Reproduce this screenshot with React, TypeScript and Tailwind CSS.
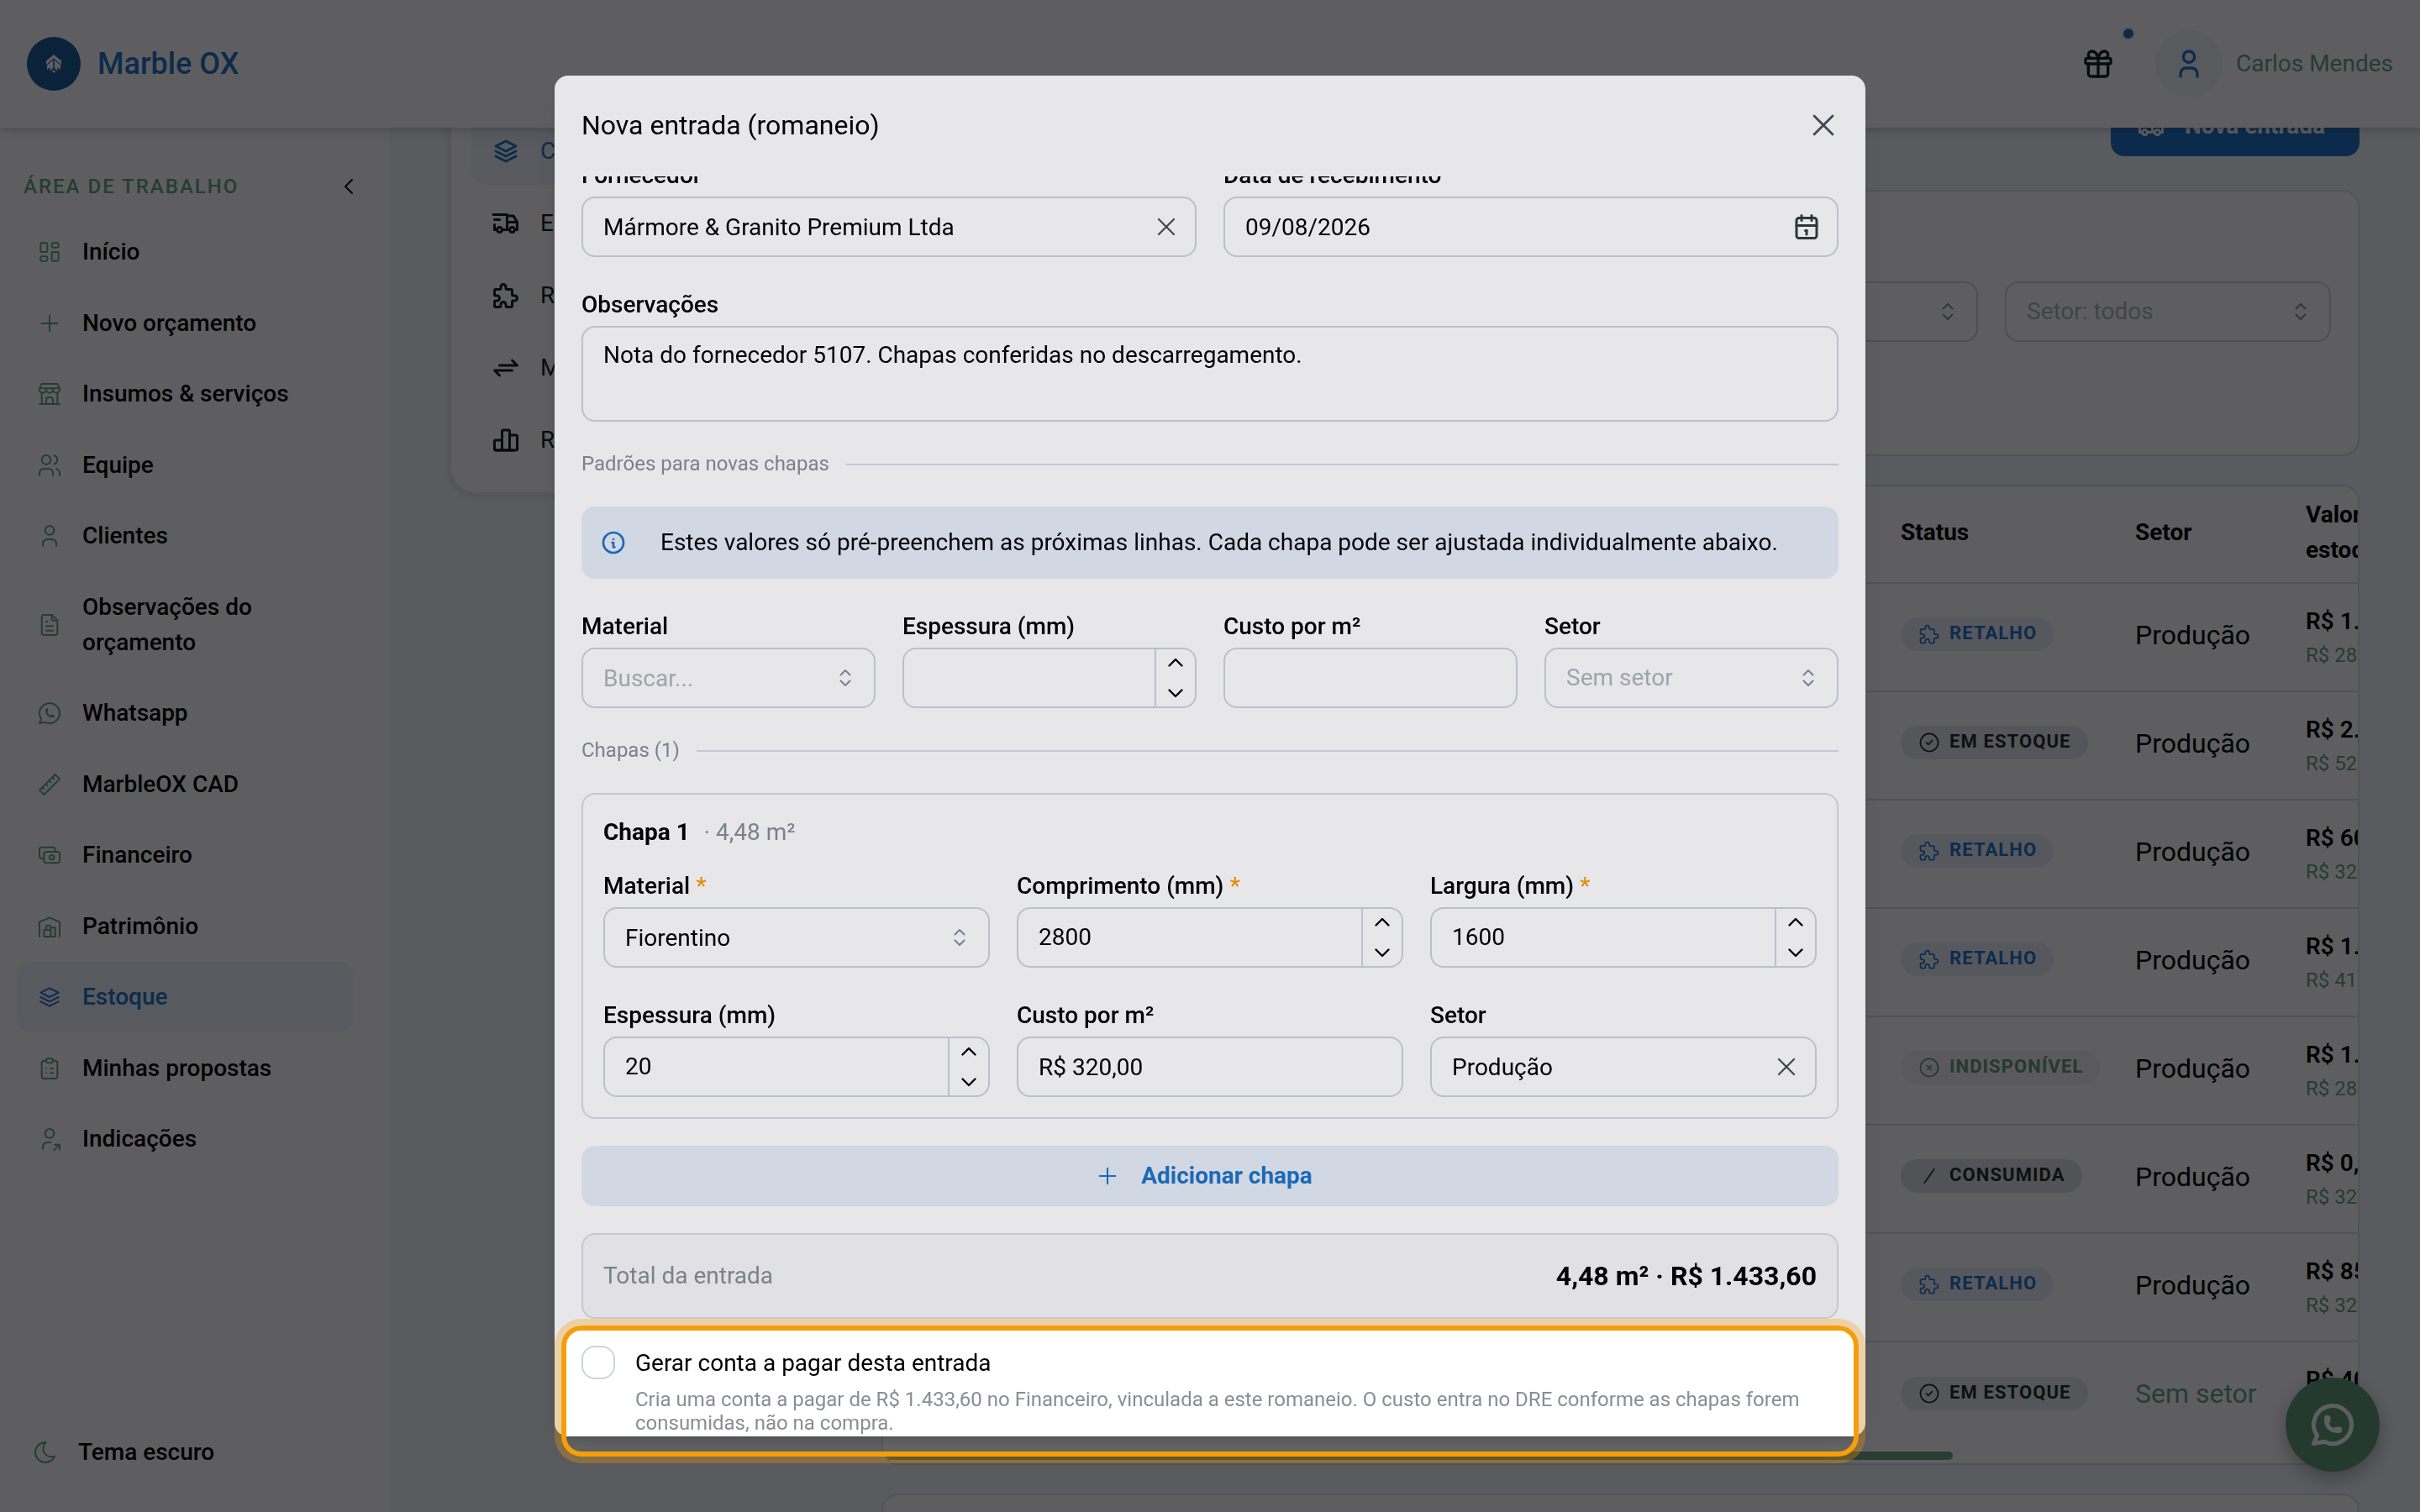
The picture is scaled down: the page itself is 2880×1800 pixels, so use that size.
import React from 'react';
import {
  TbArrowsExchange,
  TbBrandWhatsapp,
  TbBuildingStore,
  TbBuildingWarehouse,
  TbCalendar,
  TbCash,
  TbChartBar,
  TbChevronLeft,
  TbCircleCheck,
  TbCircleX,
  TbClipboardList,
  TbFileText,
  TbGift,
  TbInfoCircle,
  TbLayoutDashboard,
  TbMoon,
  TbPlus,
  TbPuzzle,
  TbRuler2,
  TbSlash,
  TbStack2,
  TbTruckDelivery,
  TbUser,
  TbUserShare,
  TbUsers,
  TbX,
} from 'react-icons/tb';
import type { IconType } from 'react-icons';

const NAV_ITEMS: { label: string; icon: IconType; active?: boolean }[] = [
  { label: 'Início', icon: TbLayoutDashboard },
  { label: 'Novo orçamento', icon: TbPlus },
  { label: 'Insumos & serviços', icon: TbBuildingStore },
  { label: 'Equipe', icon: TbUsers },
  { label: 'Clientes', icon: TbUser },
  { label: 'Observações do orçamento', icon: TbFileText },
  { label: 'Whatsapp', icon: TbBrandWhatsapp },
  { label: 'MarbleOX CAD', icon: TbRuler2 },
  { label: 'Financeiro', icon: TbCash },
  { label: 'Patrimônio', icon: TbBuildingWarehouse },
  { label: 'Estoque', icon: TbStack2, active: true },
  { label: 'Minhas propostas', icon: TbClipboardList },
  { label: 'Indicações', icon: TbUserShare },
];

const STOCK_TABS: { label: string; icon: IconType; active?: boolean }[] = [
  { label: 'Chapas', icon: TbStack2, active: true },
  { label: 'Entradas', icon: TbTruckDelivery },
  { label: 'Retalhos', icon: TbPuzzle },
  { label: 'Movimentações', icon: TbArrowsExchange },
  { label: 'Relatórios', icon: TbChartBar },
];

type Status = 'RETALHO' | 'EM ESTOQUE' | 'INDISPONÍVEL' | 'CONSUMIDA';

const STATUS_STYLE: Record<Status, { icon: IconType; className: string }> = {
  RETALHO: { icon: TbPuzzle, className: 'bg-[#e8eff9] text-[#1d73c8]' },
  'EM ESTOQUE': { icon: TbCircleCheck, className: 'bg-[#e6e9ee] text-[#1c2b24]' },
  INDISPONÍVEL: { icon: TbCircleX, className: 'bg-[#f3f4f8] text-[#639a6c]' },
  CONSUMIDA: { icon: TbSlash, className: 'bg-[#dcdfe4] text-[#1c2b24]' },
};

const ROWS: { status: Status; sector?: string; value: string; perMeter: string }[] = [
  { status: 'RETALHO', sector: 'Produção', value: 'R$ 1.120,00', perMeter: 'R$ 280,00/m²' },
  { status: 'EM ESTOQUE', sector: 'Produção', value: 'R$ 2.340,00', perMeter: 'R$ 520,00/m²' },
  { status: 'RETALHO', sector: 'Produção', value: 'R$ 608,00', perMeter: 'R$ 320,00/m²' },
  { status: 'RETALHO', sector: 'Produção', value: 'R$ 1.230,00', perMeter: 'R$ 410,00/m²' },
  { status: 'INDISPONÍVEL', sector: 'Produção', value: 'R$ 1.254,00', perMeter: 'R$ 280,00/m²' },
  { status: 'CONSUMIDA', sector: 'Produção', value: 'R$ 0,00', perMeter: 'R$ 320,00/m²' },
  { status: 'RETALHO', sector: 'Produção', value: 'R$ 854,00', perMeter: 'R$ 320,00/m²' },
  { status: 'EM ESTOQUE', value: 'R$ 409,00', perMeter: 'R$ 320,00/m²' },
];

const BOX = 'h-[72px] w-full rounded-2xl border-2 border-[#ced4da] bg-transparent px-6 text-[28px] outline-none';

const Selector: React.FC = () => (
  <svg
    viewBox="0 0 16 24"
    className="pointer-events-none absolute right-7 top-1/2 h-6 w-4 -translate-y-1/2"
    fill="none"
    stroke="currentColor"
    strokeWidth="2"
    strokeLinecap="round"
    strokeLinejoin="round"
  >
    <path d="M2.5 8.5L8 3l5.5 5.5M2.5 15.5L8 21l5.5-5.5" />
  </svg>
);

const Chevron: React.FC<{ up?: boolean }> = ({ up }) => (
  <svg viewBox="0 0 20 12" className="h-3 w-5" fill="none" stroke="currentColor" strokeWidth="2.4" strokeLinecap="round" strokeLinejoin="round">
    <path d={up ? 'M2.5 9.5L10 2l7.5 7.5' : 'M2.5 2.5L10 10l7.5-7.5'} />
  </svg>
);

interface FieldProps {
  id: string;
  label: string;
  required?: boolean;
  children: React.ReactNode;
}

const Field: React.FC<FieldProps> = ({ id, label, required, children }) => (
  <div className="flex flex-col gap-1 pt-1">
    <label htmlFor={id} className="text-[28px] font-medium leading-[42px]">
      {label}
      {required && <span className="text-[#f59e0b]"> *</span>}
    </label>
    {children}
  </div>
);

const NumberBox: React.FC<{ id: string; value?: string }> = ({ id, value }) => (
  <div className="flex h-[72px] overflow-hidden rounded-2xl border-2 border-[#ced4da]">
    <input id={id} inputMode="numeric" defaultValue={value} className="min-w-0 flex-1 bg-transparent px-6 text-[28px] outline-none" />
    <div className="flex w-12 shrink-0 flex-col border-l-2 border-[#ced4da]">
      <button type="button" aria-label="Aumentar" className="flex flex-1 items-center justify-center pb-[2px]">
        <Chevron up />
      </button>
      <button type="button" aria-label="Diminuir" className="flex flex-1 items-center justify-center pt-[2px]">
        <Chevron />
      </button>
    </div>
  </div>
);

const ClearableBox: React.FC<{ id: string; value: string }> = ({ id, value }) => (
  <div className="relative">
    <input id={id} defaultValue={value} className={BOX} />
    <button type="button" aria-label="Limpar" className="absolute right-[18px] top-[18px] text-[#495057]">
      <TbX size={36} strokeWidth={1.5} />
    </button>
  </div>
);

const SearchBox: React.FC<{ id: string; placeholder?: string; value?: string }> = ({ id, placeholder, value }) => (
  <div className="relative">
    <input id={id} placeholder={placeholder} defaultValue={value} className={`${BOX} placeholder:text-[#adb5bd]`} />
    <span className="text-[#868e96]">
      <Selector />
    </span>
  </div>
);

const SelectBox: React.FC<{ id: string; text: string; label?: string }> = ({ id, text, label }) => (
  <div className="relative">
    <select id={id} aria-label={label} className={`${BOX} appearance-none text-[#adb5bd]`}>
      <option>{text}</option>
    </select>
    <span className="text-[#868e96]">
      <Selector />
    </span>
  </div>
);

const Divider: React.FC<{ label: string }> = ({ label }) => (
  <div className="flex items-center gap-5">
    <span className="text-2xl leading-[37px] text-[#868e96]">{label}</span>
    <span className="h-[2px] flex-1 bg-[#dbdde4]" />
  </div>
);

const Header: React.FC = () => (
  <header className="z-10 flex h-[152px] shrink-0 items-center justify-between bg-white px-8 shadow-[0_2px_6px_rgba(0,0,0,0.15),0_8px_16px_rgba(0,0,0,0.08)]">
    <a href="#" className="flex items-center gap-5">
      <span className="flex size-16 items-center justify-center rounded-full bg-[#19599a]">
        <svg viewBox="0 0 18 22" className="h-[22px] w-[18px]">
          <path d="M9 0L18 7.5V12L9 4.5 0 12V7.5z" fill="#fff" />
          <path d="M8.3 6.5V16l-3.8 3.500V15L1 18v-5.500zM9.700 6.500V16l3.800 3.500V15l3.500 3v-5.500z" fill="#fff" />
          <circle cx="9" cy="20" r="1.6" fill="#fff" />
        </svg>
      </span>
      <span className="text-4xl font-medium text-[#1d73c8]">Marble OX</span>
    </a>
    <div className="flex items-center">
      <button type="button" aria-label="Novidades" className="relative mr-12 flex size-10 items-center justify-center text-[#0f1a15]">
        <TbGift size={40} />
        <span className="absolute -right-6 -top-6 size-4 rounded-full border-2 border-[#e8eff9] bg-[#1d73c8]" />
      </button>
      <button type="button" className="flex items-center gap-4">
        <span className="flex size-20 items-center justify-center rounded-full bg-[#eff3fa] text-[#1d73c8]">
          <TbUser size={40} />
        </span>
        <span className="text-[28px] text-[#63a37a]">Carlos Mendes</span>
      </button>
    </div>
  </header>
);

const Sidebar: React.FC = () => (
  <aside className="flex w-[463px] shrink-0 flex-col bg-white">
    <div className="flex items-center justify-between pb-4 pl-7 pr-8 pt-[50px]">
      <span className="text-2xl font-medium leading-10 tracking-[2px] text-[#63a37a]">ÁREA DE TRABALHO</span>
      <button type="button" aria-label="Recolher menu">
        <TbChevronLeft size={32} strokeWidth={1.5} />
      </button>
    </div>
    <nav className="flex min-h-[1140px] flex-col justify-between pl-5 pr-[43px]">
      {NAV_ITEMS.map(({ label, icon: Icon, active }) => (
        <a
          key={label}
          href="#"
          className={`flex items-center gap-[23px] rounded-2xl px-[23px] py-[21px] text-[28px] font-medium leading-[42px] ${
            active ? 'bg-[#eef3fb] text-[#1d73c8]' : ''
          }`}
        >
          <Icon size={32} strokeWidth={1.5} className={active ? 'shrink-0' : 'shrink-0 text-[#63a37a]'} />
          <span>{label}</span>
        </a>
      ))}
    </nav>
    <button type="button" className="mb-[50px] mt-auto flex items-center gap-[23px] pl-[38px] text-[28px] font-medium leading-[42px]">
      <TbMoon size={32} strokeWidth={1.5} className="text-[#63a37a]" />
      Tema escuro
    </button>
  </aside>
);

const StatusBadge: React.FC<{ status: Status }> = ({ status }) => {
  const { icon: Icon, className } = STATUS_STYLE[status];
  return (
    <span className={`inline-flex h-10 items-center gap-[10px] rounded-full px-5 ${className}`}>
      <Icon size={28} strokeWidth={1.5} />
      <span className="pb-[2px] text-[22px] font-bold leading-8 tracking-wider">{status}</span>
    </span>
  );
};

const StockPage: React.FC = () => (
  <main className="flex min-w-0 flex-1 items-start gap-8 pl-[72px] pr-[72px]">
    {/* scrolled under the header */}
    <nav className="-mt-[38px] flex w-[482px] shrink-0 flex-col gap-[6px] rounded-[32px] border-2 border-[#e9ecf1] bg-white px-6 pb-[22px] pt-6 shadow-[0_4px_12px_rgba(0,0,0,0.1)]">
      {STOCK_TABS.map(({ label, icon: Icon, active }) => (
        <a
          key={label}
          href="#"
          className={`flex h-20 items-center gap-[23px] rounded-2xl px-[23px] text-[28px] ${
            active ? 'bg-[#eef3fb] text-[#1d73c8]' : 'text-[#0f1a15]'
          }`}
        >
          <Icon size={36} />
          {label}
        </a>
      ))}
    </nav>

    <div className="-mt-[38px] flex min-w-0 flex-1 flex-col gap-[34px]">
      <div className="mb-[6px] flex justify-end">
        <button type="button" className="flex h-[72px] items-center gap-[22px] rounded-2xl bg-[#1d73c8] pl-[30px] pr-[41px] text-[28px] font-bold text-white">
          <TbTruckDelivery size={36} />
          Nova entrada
        </button>
      </div>

      <section className="grid grid-cols-[1fr_388px_388px] gap-8 rounded-[20px] border-2 border-[#dbdde4] bg-white px-8 pb-[134px] pt-[107px]">
        <input aria-label="Pesquisar chapas" className={BOX} />
        <SelectBox id="filter-status" label="Status" text="" />
        <SelectBox id="filter-sector" label="Setor" text="Setor: todos" />
      </section>

      <section className="overflow-hidden rounded-[20px] border-2 border-[#dbdde4] bg-white">
        <table className="w-[1852px] table-fixed border-collapse text-left">
          <colgroup>
            <col className="w-[1191px]" />
            <col className="w-[279px]" />
            <col className="w-[203px]" />
            <col className="w-[179px]" />
          </colgroup>
          <thead>
            <tr className="h-[115px] border-b-2 border-[#dbdde4] text-[28px] leading-[42px]">
              <th />
              <th className="px-5 pb-1 font-bold">Status</th>
              <th className="px-5 pb-1 font-bold">Setor</th>
              <th className="px-5 pb-1 font-bold">Valor em estoque</th>
            </tr>
          </thead>
          <tbody>
            {ROWS.map((row, i) => (
              <tr key={i} className="h-[129px] border-b-2 border-[#dbdde4] last:border-b-0">
                <td />
                <td className="px-5 pb-[6px]">
                  <StatusBadge status={row.status} />
                </td>
                <td className={`px-5 pb-[6px] text-[32px] ${row.sector ? '' : 'text-[#63a37a]'}`}>{row.sector ?? 'Sem setor'}</td>
                <td className="whitespace-nowrap px-5">
                  <div className="text-[28px] font-semibold leading-[42px]">{row.value}</div>
                  <div className="text-2xl leading-[38px] text-[#63a37a]">{row.perMeter}</div>
                </td>
              </tr>
            ))}
          </tbody>
        </table>
        <div className="mb-1 mt-[2px] h-[10px] w-[1273px] rounded-full bg-[#6fa384]" />
      </section>

      <section className="h-40 rounded-[20px] border-2 border-[#dbdde4] bg-white" />
    </div>
  </main>
);

const NewEntryModal: React.FC = () => (
  <div
    role="dialog"
    aria-labelledby="modal-title"
    className="flex h-full flex-col overflow-hidden rounded-2xl bg-white shadow-[0_2px_6px_rgba(0,0,0,0.1),0_20px_50px_-10px_rgba(0,0,0,0.1),0_14px_14px_-10px_rgba(0,0,0,0.08)]"
  >
    <div className="flex h-[120px] shrink-0 items-center justify-between pb-[2px] pl-8 pr-7">
      <h2 id="modal-title" className="text-[32px]">
        Nova entrada (romaneio)
      </h2>
      <button type="button" aria-label="Fechar" className="text-[#495057]">
        <TbX size={44} strokeWidth={1.5} />
      </button>
    </div>

    <div className="min-h-0 flex-1 overflow-hidden">
      <form className="-mt-[26px] flex flex-col gap-8 px-8">
        <div className="grid grid-cols-2 gap-8">
          <Field id="supplier" label="Fornecedor">
            <ClearableBox id="supplier" value="Mármore & Granito Premium Ltda" />
          </Field>
          <Field id="received" label="Data de recebimento">
            <div className="relative">
              <input id="received" defaultValue="09/08/2026" className={BOX} />
              <button type="button" aria-label="Abrir calendário" className="absolute right-5 top-[18px] text-[#2b3f38]">
                <TbCalendar size={36} />
              </button>
            </div>
          </Field>
        </div>

        <Field id="notes" label="Observações">
          <textarea
            id="notes"
            defaultValue="Nota do fornecedor 5107. Chapas conferidas no descarregamento."
            className="h-[114px] resize-none rounded-2xl border-2 border-[#ced4da] bg-transparent px-6 py-3 text-[28px] leading-[42px] outline-none"
          />
        </Field>

        <Divider label="Padrões para novas chapas" />

        <div className="flex items-center gap-10 rounded-2xl bg-[#e7eef9] px-[22px] py-[22px] text-[28px] leading-[42px]">
          <TbInfoCircle size={32} className="shrink-0 text-[#1d73c8]" />
          <p>Estes valores só pré-preenchem as próximas linhas. Cada chapa pode ser ajustada individualmente abaixo.</p>
        </div>

        <div className="grid grid-cols-4 gap-8">
          <Field id="default-material" label="Material">
            <SearchBox id="default-material" placeholder="Buscar..." />
          </Field>
          <Field id="default-thickness" label="Espessura (mm)">
            <NumberBox id="default-thickness" />
          </Field>
          <Field id="default-cost" label="Custo por m²">
            <input id="default-cost" className={BOX} />
          </Field>
          <Field id="default-sector" label="Setor">
            <SelectBox id="default-sector" text="Sem setor" />
          </Field>
        </div>

        <Divider label="Chapas (1)" />

        <section className="rounded-2xl border-2 border-[#dbdde4] p-6">
          <h3 className="mb-[18px] text-[28px] font-bold leading-[42px]">
            Chapa 1 <span className="ml-[10px] font-normal text-[#868e96]">· 4,48 m²</span>
          </h3>
          <div className="grid grid-cols-3 gap-8">
            <Field id="material" label="Material" required>
              <SearchBox id="material" value="Fiorentino" />
            </Field>
            <Field id="length" label="Comprimento (mm)" required>
              <NumberBox id="length" value="2800" />
            </Field>
            <Field id="width" label="Largura (mm)" required>
              <NumberBox id="width" value="1600" />
            </Field>
            <Field id="thickness" label="Espessura (mm)">
              <NumberBox id="thickness" value="20" />
            </Field>
            <Field id="cost" label="Custo por m²">
              <input id="cost" defaultValue="R$ 320,00" className={BOX} />
            </Field>
            <Field id="sector" label="Setor">
              <ClearableBox id="sector" value="Produção" />
            </Field>
          </div>
        </section>

        <button type="button" className="flex h-[72px] items-center justify-center gap-6 rounded-2xl bg-[#e7eef9] pr-4 text-[28px] font-bold text-[#1d73c8]">
          <TbPlus size={32} strokeWidth={1.5} />
          Adicionar chapa
        </button>

        <div className="flex h-[102px] items-center justify-between rounded-2xl border-2 border-[#dbdde4] bg-[#f8f8fb] px-6">
          <span className="text-[28px] text-[#868e96]">Total da entrada</span>
          <strong className="text-[32px] font-bold">4,48 m² · R$ 1.433,60</strong>
        </div>

        <div className="flex gap-6">
          <input id="payable" type="checkbox" className="size-10 shrink-0 appearance-none rounded-2xl border-2 border-[#ced4da] bg-white" />
          <div>
            <label htmlFor="payable" className="block text-[28px] leading-[42px]">
              Gerar conta a pagar desta entrada
            </label>
            <p className="mt-2 text-2xl leading-7 text-[#868e96]">
              Cria uma conta a pagar de R$ 1.433,60 no Financeiro, vinculada a este romaneio. O custo entra no DRE conforme as chapas forem
              consumidas, não na compra.
            </p>
          </div>
        </div>
      </form>
    </div>
  </div>
);

export default function App() {
  return (
    <div className="flex h-screen flex-col overflow-hidden bg-[#f2f7fa] font-['Roboto',sans-serif] text-black">
      <Header />
      <div className="flex min-h-0 flex-1">
        <Sidebar />
        <StockPage />
      </div>

      <a
        href="#"
        aria-label="Falar no WhatsApp"
        className="fixed bottom-12 right-12 flex size-28 items-center justify-center rounded-full bg-[#5f9c75] text-white shadow-[0_8px_24px_rgba(0,0,0,0.3)]"
      >
        <TbBrandWhatsapp size={60} />
      </a>

      <div className="fixed inset-0 z-20 flex items-center justify-center overflow-hidden bg-black/60">
        <div className="relative h-[90vh] w-[1560px] max-w-full">
          <NewEntryModal />
          {/* tour spotlight: dims everything outside its frame */}
          <div className="pointer-events-none absolute inset-x-2 -bottom-6 h-[156px] rounded-3xl border-[6px] border-[#f59e0b] shadow-[0_0_0_8px_rgba(245,158,11,0.3),0_0_0_4000px_rgba(15,23,42,0.1)]" />
        </div>
      </div>
    </div>
  );
}
